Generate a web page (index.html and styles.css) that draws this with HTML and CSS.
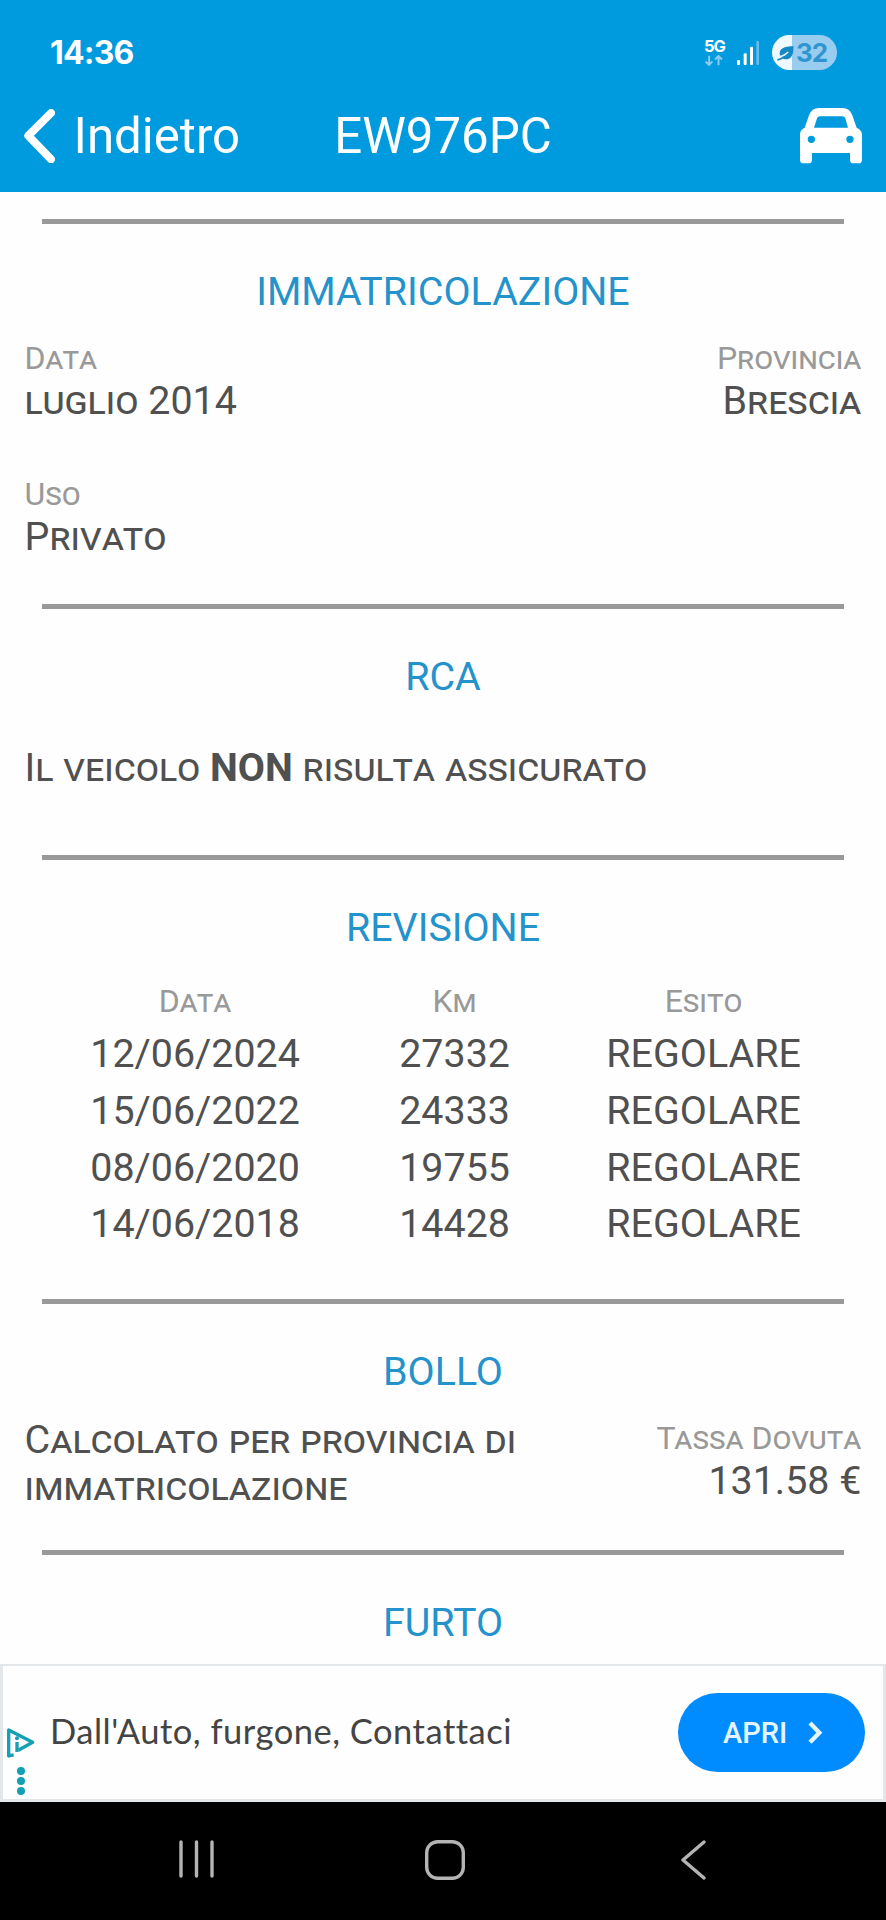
FILE: index.html
```html
<!DOCTYPE html>
<html lang="it">
<head>
<meta charset="utf-8">
<title>EW976PC</title>
<link rel="stylesheet" href="styles.css">
</head>
<body>
<div class="screen">
  <header class="top">
    <div class="status">
      <span class="clock">14:36</span>
      <div class="indicators">
        <div class="network">
          <span class="network-label">5G</span>
          <svg class="arrows" viewBox="0 0 60 34"><path d="M15 2V30M4 20L15 31L25 20M44 32V4M33 14L44 3L55 14"/></svg>
        </div>
        <svg class="signal" viewBox="0 0 66 72"><rect y="57" width="9" height="15" rx="3"/><rect x="20" y="37" width="9" height="35" rx="3"/><rect x="39" y="17" width="9" height="55" rx="3"/><rect class="dim" x="58" width="8" height="72" rx="3"/></svg>
        <div class="battery">
          <svg class="leaf" viewBox="0 0 50 46"><path class="leaf-body" d="M8 28C6 10 20 3 49 3C47 12 50 22 42 34C34 44 22 43 15 38Z"/><path class="leaf-vein" d="M9 34C18 32 26 27 33 20"/><path class="leaf-stem" d="M1 43C6 42 12 40 19 36"/></svg>
          <span class="battery-level">32</span>
        </div>
      </div>
    </div>
    <div class="appbar">
      <a class="back">
        <svg class="back-icon" viewBox="0 0 93 163"><path d="M81 12L13 80L81 151"/></svg>
        <span>Indietro</span>
      </a>
      <h1 class="title">EW976PC</h1>
      <svg class="car" viewBox="0 0 186 166"><path fill-rule="evenodd" d="M0 78Q0 66 14 59L27 22Q35 0 57 0H128Q149 0 157 22L170 59Q186 66 186 80V155Q186 166 176 166H161Q150 166 150 155V135H36V155Q36 166 26 166H10Q0 166 0 155ZM42 59H144L136 31Q134 25 127 25H60Q53 25 51 31ZM34 83A11 11 0 1 0 34 105A11 11 0 1 0 34 83ZM150 83A11 11 0 1 0 150 105A11 11 0 1 0 150 83Z"/></svg>
    </div>
  </header>

  <main class="content">
    <section class="section registration">
      <h2 class="heading">IMMATRICOLAZIONE</h2>
      <div class="row">
        <div class="field"><div class="label">Data</div><div class="value">luglio 2014</div></div>
        <div class="field end"><div class="label">Provincia</div><div class="value">Brescia</div></div>
      </div>
      <div class="row spaced">
        <div class="field"><div class="label">Uso</div><div class="value">Privato</div></div>
      </div>
    </section>

    <section class="section insurance">
      <h2 class="heading">RCA</h2>
      <p class="value">Il veicolo <b>NON</b> risulta assicurato</p>
    </section>

    <section class="section inspections">
      <h2 class="heading">REVISIONE</h2>
      <div class="grid">
        <div class="label">Data</div><div class="label">Km</div><div class="label">Esito</div>
        <div class="cell">12/06/2024</div><div class="cell">27332</div><div class="cell">REGOLARE</div>
        <div class="cell">15/06/2022</div><div class="cell">24333</div><div class="cell">REGOLARE</div>
        <div class="cell">08/06/2020</div><div class="cell">19755</div><div class="cell">REGOLARE</div>
        <div class="cell">14/06/2018</div><div class="cell">14428</div><div class="cell">REGOLARE</div>
      </div>
    </section>

    <section class="section tax">
      <h2 class="heading">BOLLO</h2>
      <div class="row">
        <div class="value tax-note">Calcolato per provincia di immatricolazione</div>
        <div class="field end due"><div class="label">Tassa Dovuta</div><div class="value">131.58 €</div></div>
      </div>
    </section>

    <section class="section">
      <h2 class="heading">FURTO</h2>
    </section>
  </main>

  <aside class="ad">
    <div class="ad-marks">
      <svg class="adchoices" viewBox="0 0 84 88"><path class="ad-tri" d="M20 81L5 84V6L77 43L34 67"/><rect class="ad-fill" x="25" y="42" width="10" height="30"/><circle class="ad-fill" cx="30" cy="31" r="6"/></svg>
      <svg class="dots" viewBox="0 0 24 84"><circle cx="12" cy="12" r="12"/><circle cx="12" cy="42" r="12"/><circle cx="12" cy="72" r="12"/></svg>
    </div>
    <span class="ad-text">Dall'Auto, furgone, Contattaci</span>
    <a class="ad-button"><span>APRI</span><svg class="ad-chevron" viewBox="0 0 44 70"><path d="M6 6L34 35L6 64"/></svg></a>
  </aside>

  <nav class="navbar">
    <svg class="recents" viewBox="0 0 36 38"><path d="M2 2V36M17.500 2V36M33 2V36"/></svg>
    <svg class="home" viewBox="0 0 40 40"><rect x="1.700" y="1.700" width="36.600" height="36.600" rx="11"/></svg>
    <svg class="nav-back" viewBox="0 0 25 40"><path d="M23 2L2 20L23 38"/></svg>
  </nav>
</div>
</body>
</html>
```

FILE: styles.css
```css
* { box-sizing: border-box; margin: 0; padding: 0; }
body { background: #fefefe; font-family: Roboto, sans-serif; font-size: 39.4px; color: #505050; }
svg { display: block; flex: none; }
.screen { width: 886px; height: 1920px; display: flex; flex-direction: column; overflow: hidden; }

.top { height: 192px; flex: none; background: #009ade; color: #fff; }
.status { height: 80px; padding: 34px 49px 0 50px; display: flex; justify-content: space-between; }
.clock { font: 700 32px/37px Inter, sans-serif; letter-spacing: -0.8px; }
.indicators { display: flex; align-items: flex-start; }
.network { width: 21px; margin: 5px 12px 0 0; }
.network-label { display: block; font: 700 16.500px/14px Inter, sans-serif; letter-spacing: -1px; }
.arrows { width: 20px; height: 11px; margin-top: 2px; fill: none; stroke: #8ccbf0; stroke-width: 6; }
.signal { width: 22px; height: 24px; margin: 7px 13px 0 0; fill: #fff; }
.signal .dim { fill: #66bdea; }
.battery { width: 65px; height: 35px; margin-top: 1px; padding-left: 5px; border-radius: 18px; background: linear-gradient(90deg, #f0f9ff 20px, #99cdf0 20px); display: flex; align-items: center; }
.leaf { width: 17px; height: 16px; }
.leaf-body { fill: #1489c6; }
.leaf-vein { fill: none; stroke: #e8f6ff; stroke-width: 5; }
.leaf-stem { fill: none; stroke: #1489c6; stroke-width: 5; }
.battery-level { margin-left: 2px; font: 700 26px/35px Inter, sans-serif; letter-spacing: -1px; color: #2e95d0; }

.appbar { height: 112px; padding: 0 24px; display: grid; grid-template-columns: 1fr auto 1fr; align-items: center; font-size: 49.200px; line-height: 111px; }
.back { display: flex; align-items: center; gap: 18.500px; }
.back-icon { width: 31px; height: 54.300px; fill: none; stroke: #fff; stroke-width: 24; stroke-linecap: round; stroke-linejoin: round; }
.title { font-size: 49.200px; font-weight: 400; }
.car { width: 62px; height: 55.300px; justify-self: end; fill: #fff; }

.content { flex: 1; min-height: 0; padding: 27px 24.600px 0; overflow: hidden; }
.section { padding-bottom: 44px; }
.section::before { content: ""; display: block; height: 5px; margin: 0 17.400px 44px; background: #999; }
.heading { font-size: 39.400px; line-height: 47px; font-weight: 400; text-align: center; color: #2492cb; margin-bottom: 24px; }
.row { display: flex; justify-content: space-between; }
.registration { padding-bottom: 44px; }
.spaced { margin-top: 51px; }
.end { text-align: right; }
.label { font-size: 32px; line-height: 38px; font-variant: small-caps; color: #999; }
.value { line-height: 47px; font-variant: small-caps; }
.insurance { padding-bottom: 64px; }
.insurance .heading { margin-bottom: 44px; }
.inspections .heading { margin-bottom: 31px; }
.inspections { padding-bottom: 46px; }
.grid { display: grid; grid-template-columns: 341px 178px 320px; text-align: center; }
.grid .label { margin-bottom: 6px; }
.cell { line-height: 56.750px; }
.tax { padding-bottom: 40px; }
.tax .heading { margin-bottom: 21px; }
.tax-note { width: 540px; }
.due { padding-top: 3px; }

.ad { height: 138px; flex: none; border: 3px solid #e4e7e9; border-top-width: 2px; background: #fefefe; display: flex; padding-right: 18px; align-items: center; }
.ad-marks { width: 47px; padding: 58px 0 0 4px; }
.adchoices { width: 28px; height: 29.300px; }
.ad-tri { fill: none; stroke: #13a0b4; stroke-width: 10; stroke-linejoin: round; }
.ad-fill, .dots { fill: #13a0b4; }
.dots { width: 8px; height: 28px; margin: 9px 0 0 10px; }
.ad-text { flex: 1; padding-bottom: 3px; font: 400 34.500px/42px Lato, sans-serif; font-variant-ligatures: none; letter-spacing: 0.500px; color: #444; white-space: nowrap; }
.ad-button { width: 187px; height: 79px; border-radius: 40px; background: #008bff; color: #e4f5ff; display: flex; align-items: center; padding-left: 45px; font: 500 29px/74px Roboto, sans-serif; gap: 21px; }
.ad-chevron { width: 14.700px; height: 23.300px; fill: none; stroke: #e4f5ff; stroke-width: 13; }

.navbar { height: 118px; flex: none; background: #000; display: grid; grid-template-columns: 246px 256px auto; padding: 38px 0 0 179px; fill: none; stroke: #b4b4b4; stroke-width: 3.400; stroke-linecap: round; stroke-linejoin: round; }
.recents { width: 36px; height: 38px; }
.home { width: 40px; height: 40px; }
.nav-back { width: 25px; height: 40px; }
```
